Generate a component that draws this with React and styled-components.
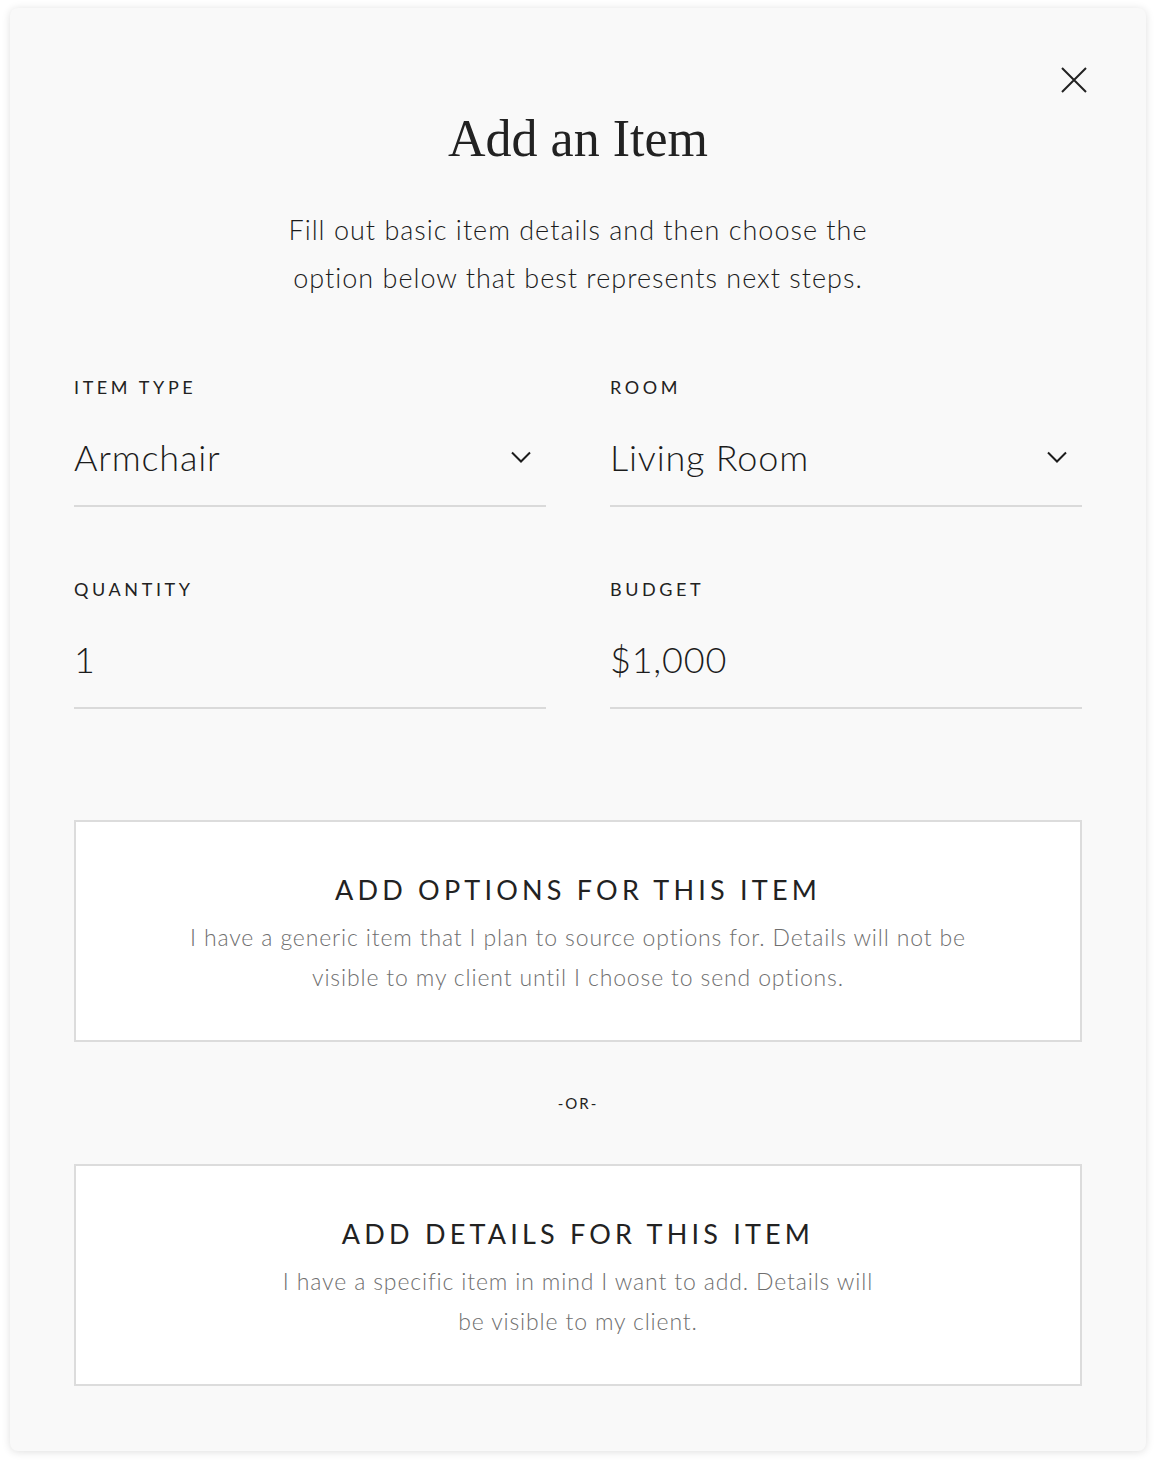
import React from 'react';
import styled, { createGlobalStyle } from 'styled-components';

const colors = {
  ink: '#222222',
  muted: '#6f6f6f',
  card: '#f9f9f9',
  white: '#ffffff',
  rule: '#dadada',
};

const sans = "Lato, 'Open Sans', sans-serif";
const serif = "'Liberation Serif', 'DejaVu Serif', serif";

const GlobalStyle = createGlobalStyle`
  html, body {
    margin: 0;
    padding: 0;
    background: #ffffff;
  }
  body {
    font-family: ${sans};
    color: ${colors.ink};
    -webkit-font-smoothing: antialiased;
  }
`;

const Page = styled.div`
  padding: 8px 10px 12px;
`;

const Modal = styled.section`
  position: relative;
  box-sizing: border-box;
  width: 1136px;
  padding: 100px 64px 65px;
  background: ${colors.card};
  border-radius: 8px;
  box-shadow: 0 1px 8px rgba(0, 0, 0, 0.13);
`;

const CloseButton = styled.button`
  position: absolute;
  top: 57px;
  right: 57px;
  width: 30px;
  height: 30px;
  padding: 2px;
  border: 0;
  background: none;
  cursor: pointer;
  color: ${colors.ink};

  svg {
    display: block;
  }
`;

const Title = styled.h1`
  margin: 0;
  font-family: ${serif};
  font-weight: 400;
  font-size: 52px;
  line-height: 62px;
  text-align: center;
  color: ${colors.ink};
`;

const Intro = styled.p`
  margin: 36px 0 0;
  font-size: 27px;
  font-weight: 300;
  line-height: 48px;
  letter-spacing: 1px;
  text-align: center;
  color: #1c1c1c;
`;

const FieldGrid = styled.div`
  display: grid;
  grid-template-columns: 1fr 1fr;
  column-gap: 64px;
  row-gap: 70px;
  margin-top: 73px;
`;

const Field = styled.div`
  display: flex;
  flex-direction: column;
`;

const Label = styled.span`
  font-size: 18px;
  line-height: 24px;
  letter-spacing: 3.6px;
  text-transform: uppercase;
  color: ${colors.ink};
`;

const Value = styled.div`
  display: flex;
  align-items: center;
  justify-content: space-between;
  margin-top: 34px;
  padding: 0 14px 24px 0;
  border-bottom: 2px solid ${colors.rule};
  font-size: 36px;
  font-weight: 300;
  line-height: 48px;
  letter-spacing: 0.8px;
  color: #1c1c1c;
`;

const Chevron = () => (
  <svg width="22" height="14" viewBox="0 0 22 14" fill="none">
    <path d="M2 2.5 L11 11.5 L20 2.5" stroke="currentColor" strokeWidth="2" />
  </svg>
);

const Choices = styled.div`
  display: flex;
  flex-direction: column;
  align-items: stretch;
  margin-top: 111px;
`;

const Choice = styled.button`
  display: flex;
  flex-direction: column;
  align-items: center;
  box-sizing: border-box;
  height: 222px;
  padding: 50px 20px 0;
  border: 2px solid #dcdcdc;
  background: ${colors.white};
  cursor: pointer;
  font-family: ${sans};
  text-align: center;
`;

const ChoiceTitle = styled.span`
  font-size: 27px;
  font-weight: 400;
  line-height: 36px;
  letter-spacing: 4.2px;
  text-transform: uppercase;
  color: ${colors.ink};
`;

const ChoiceText = styled.span`
  margin-top: 9px;
  font-size: 23px;
  font-weight: 300;
  line-height: 40px;
  letter-spacing: 0.85px;
  color: ${colors.muted};
`;

const Divider = styled.div`
  padding: 51px 0;
  font-size: 15px;
  line-height: 20px;
  letter-spacing: 2px;
  text-align: center;
  color: ${colors.ink};
`;

const fields = [
  { label: 'Item Type', value: 'Armchair', select: true },
  { label: 'Room', value: 'Living Room', select: true },
  { label: 'Quantity', value: '1' },
  { label: 'Budget', value: '$1,000' },
];

export default function App() {
  return (
    <Page>
      <GlobalStyle />
      <Modal>
        <CloseButton aria-label="Close">
          <svg width="26" height="26" viewBox="0 0 26 26" fill="none">
            <path d="M1 1 L25 25 M25 1 L1 25" stroke="currentColor" strokeWidth="2" />
          </svg>
        </CloseButton>

        <Title>Add an Item</Title>
        <Intro>
          Fill out basic item details and then choose the
          <br />
          option below that best represents next steps.
        </Intro>

        <FieldGrid>
          {fields.map((f) => (
            <Field key={f.label}>
              <Label>{f.label}</Label>
              <Value>
                <span>{f.value}</span>
                {f.select && <Chevron />}
              </Value>
            </Field>
          ))}
        </FieldGrid>

        <Choices>
          <Choice>
            <ChoiceTitle>Add options for this item</ChoiceTitle>
            <ChoiceText>
              I have a generic item that I plan to source options for. Details will not be
              <br />
              visible to my client until I choose to send options.
            </ChoiceText>
          </Choice>
          <Divider>-OR-</Divider>
          <Choice>
            <ChoiceTitle>Add details for this item</ChoiceTitle>
            <ChoiceText>
              I have a specific item in mind I want to add. Details will
              <br />
              be visible to my client.
            </ChoiceText>
          </Choice>
        </Choices>
      </Modal>
    </Page>
  );
}
